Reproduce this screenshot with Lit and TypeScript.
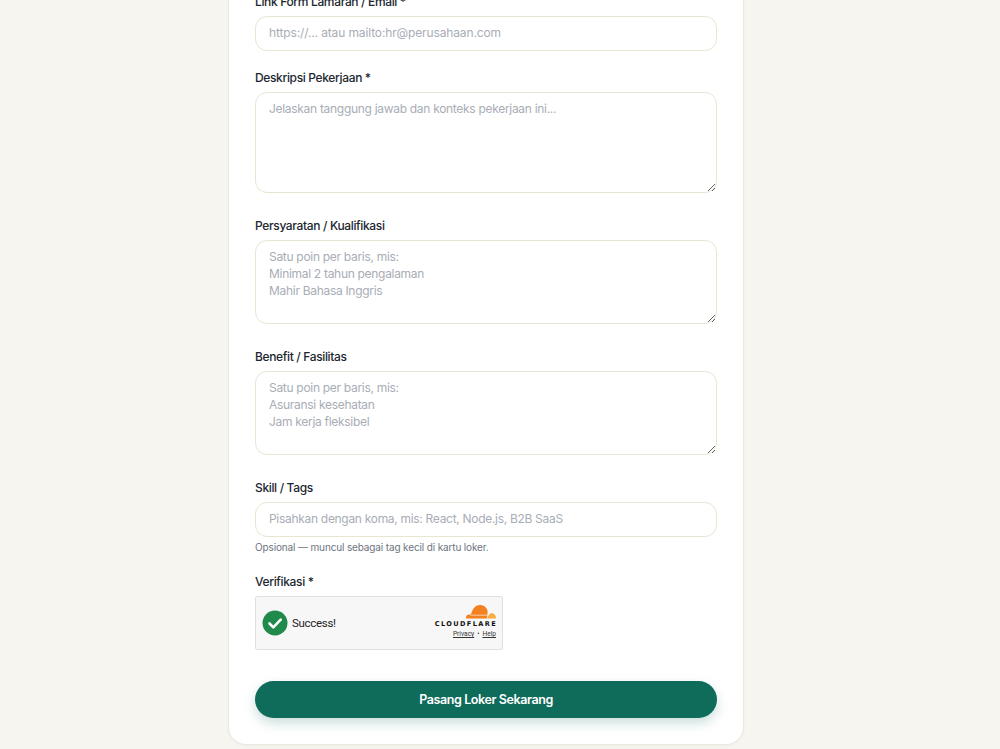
import { LitElement, html, css } from "lit";
import { customElement } from "lit/decorators.js";

@customElement("app-root")
export class AppRoot extends LitElement {
  static styles = css`
    :host { display: block; height: 749px; overflow: hidden; background: #f6f5f0; font-family: "Inter", "Noto Sans", sans-serif; }
    .page { display: flex; justify-content: center; padding-right: 28px; }
    .card { width: 516px; box-sizing: border-box; margin-top: -37px; background: #fff; border: 1px solid #ebe8dc; border-radius: 0 0 18px 18px; padding: 30px 26px 26px; display: flex; flex-direction: column; box-shadow: 0 1px 3px rgba(60,60,40,.04); }
    .field { display: flex; flex-direction: column; margin-bottom: 25px; }
    .field.first { margin-bottom: 19px; }
    .field.skill { margin-bottom: 20px; }
    label { font-size: 12px; line-height: 16px; color: #1c2730; font-weight: 500; margin-bottom: 6px; letter-spacing: -0.35px; }
    input, textarea { box-sizing: border-box; width: 100%; font: inherit; font-size: 12px; line-height: 17px; color: #1c2730; background: #fff; border: 1px solid #e8e5d3; border-radius: 12px; padding: 7px 14px 9px 13px; outline: none; margin: 0; display: block; letter-spacing: -0.3px; }
    input { height: 35px; }
    textarea { resize: vertical; }
    .t1 { height: 101px; }
    .t2 { height: 84px; }
    input::placeholder, textarea::placeholder { color: #a8adb6; opacity: 1; }
    .wide::placeholder { letter-spacing: -0.13px; }
    .hint { font-size: 10px; line-height: 14px; color: #6d7480; margin-top: 3px; letter-spacing: -0.14px; }
    .widget { box-sizing: border-box; width: 248px; height: 54px; background: #f7f7f7; border: 1px solid #e0e0e0; border-radius: 2px; display: flex; align-items: center; padding: 0 6px; }
    .ok { width: 26px; height: 26px; flex: none; }
    .success { font-family: "Roboto", sans-serif; font-size: 11.5px; letter-spacing: -0.3px; color: #232323; margin-left: 4px; flex: 1; }
    .brand { display: flex; flex-direction: column; align-items: flex-end; margin-top: -3px; }
    .cloud { width: 31px; height: 15px; display: block; }
    .wordmark { font-family: "DejaVu Sans", sans-serif; font-size: 6.6px; line-height: 8px; font-weight: 700; color: #111; letter-spacing: 1.35px; margin-right: -1px; margin-top: 1px; }
    .links { display: flex; gap: 3px; font-family: "Roboto", sans-serif; font-size: 6.6px; line-height: 9px; color: #333; margin-top: 2px; }
    .links span.u { text-decoration: underline; }
    button { display: block; width: 100%; height: 37px; margin-top: 6px; border: 0; border-radius: 19px; background: #0f6b5a; color: #fff; font: inherit; font-size: 12.5px; font-weight: 600; letter-spacing: -0.4px; box-shadow: 0 5px 12px rgba(15,107,90,.22); }
  `;

  render() {
    return html`
      <div class="page"><div class="card">
        <div class="field first">
          <label>Link Form Lamaran / Email *</label>
          <input class="wide" placeholder="https://... atau mailto:hr@perusahaan.com" />
        </div>
        <div class="field">
          <label>Deskripsi Pekerjaan *</label>
          <textarea class="t1" placeholder="Jelaskan tanggung jawab dan konteks pekerjaan ini..."></textarea>
        </div>
        <div class="field">
          <label>Persyaratan / Kualifikasi</label>
          <textarea class="t2" placeholder=${"Satu poin per baris, mis:\nMinimal 2 tahun pengalaman\nMahir Bahasa Inggris"}></textarea>
        </div>
        <div class="field">
          <label>Benefit / Fasilitas</label>
          <textarea class="t2" placeholder=${"Satu poin per baris, mis:\nAsuransi kesehatan\nJam kerja fleksibel"}></textarea>
        </div>
        <div class="field skill">
          <label>Skill / Tags</label>
          <input placeholder="Pisahkan dengan koma, mis: React, Node.js, B2B SaaS" />
          <div class="hint">Opsional — muncul sebagai tag kecil di kartu loker.</div>
        </div>
        <div class="field">
          <label>Verifikasi *</label>
          <div class="widget">
            <svg class="ok" viewBox="0 0 26 26"><circle cx="13" cy="13" r="12.5" fill="#1f8a4c"/><path d="M7.5 13.5l3.8 3.8 7.4-7.6" fill="none" stroke="#fff" stroke-width="2.6" stroke-linecap="round" stroke-linejoin="round"/></svg>
            <span class="success">Success!</span>
            <div class="brand">
              <svg class="cloud" viewBox="0 0 31 15">
                <path d="M1 14.5c-.3-2.400 1.200-4 3.400-4 .5 0 1 .1 1.500.3C7 6 10 1 15 1c3.800 0 6.600 2.200 7.600 6l-.4 7.500z" fill="#f48120"/>
                <path d="M22.600 14.500c.3-2.600 1.600-5.200 4-5.200 2.600 0 4.400 2.200 4.400 5.200z" fill="#faad3f"/>
                <path d="M5.500 11.200h17" stroke="#fff" stroke-width=".6"/>
              </svg>
              <div class="wordmark">CLOUDFLARE</div>
              <div class="links"><span class="u">Privacy</span><span>•</span><span class="u">Help</span></div>
            </div>
          </div>
        </div>
        <button>Pasang Loker Sekarang</button>
      </div></div>
    `;
  }
}
